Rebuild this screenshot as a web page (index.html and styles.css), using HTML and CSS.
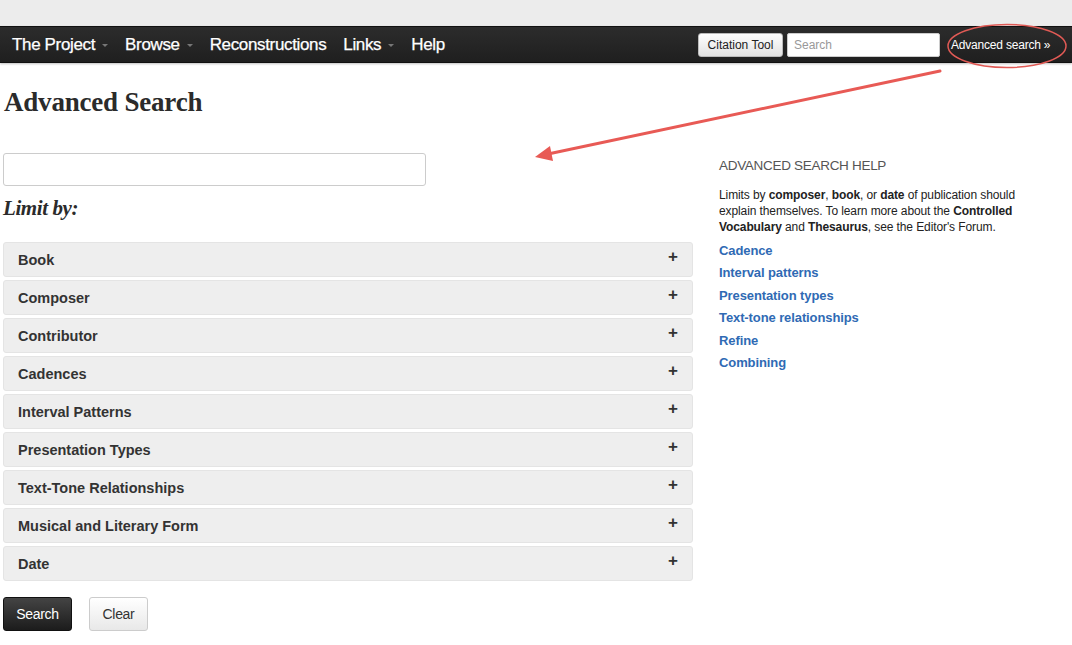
FILE: index.html
```html
<!DOCTYPE html>
<html>
<head>
<meta charset="utf-8">
<link rel="stylesheet" href="styles.css">
</head>
<body>
<div class="topstrip"></div>
<nav class="navbar">
  <ul class="nav">
    <li>The Project <span class="caret"></span></li>
    <li>Browse <span class="caret"></span></li>
    <li>Reconstructions</li>
    <li>Links <span class="caret"></span></li>
    <li>Help</li>
  </ul>
  <div class="nav-right">
    <button class="btn-cite">Citation Tool</button>
    <input class="nav-search" type="text" placeholder="Search">
    <a class="adv-link">Advanced search »</a>
  </div>
</nav>
<main class="page">
  <h1 class="title">Advanced Search</h1>
  <div class="columns">
    <section class="left">
      <input class="query" type="text">
      <h2 class="limit">Limit by:</h2>
      <div class="panels">
        <div class="panel"><span>Book</span><span class="plus">+</span></div>
        <div class="panel"><span>Composer</span><span class="plus">+</span></div>
        <div class="panel"><span>Contributor</span><span class="plus">+</span></div>
        <div class="panel"><span>Cadences</span><span class="plus">+</span></div>
        <div class="panel"><span>Interval Patterns</span><span class="plus">+</span></div>
        <div class="panel"><span>Presentation Types</span><span class="plus">+</span></div>
        <div class="panel"><span>Text-Tone Relationships</span><span class="plus">+</span></div>
        <div class="panel"><span>Musical and Literary Form</span><span class="plus">+</span></div>
        <div class="panel"><span>Date</span><span class="plus">+</span></div>
      </div>
      <div class="actions">
        <button class="btn-search">Search</button>
        <button class="btn-clear">Clear</button>
      </div>
    </section>
    <aside class="right">
      <h3 class="help-title">ADVANCED SEARCH HELP</h3>
      <p class="help-text">Limits by <b>composer</b>, <b>book</b>, or <b>date</b> of publication should explain themselves. To learn more about the <b>Controlled Vocabulary</b> and <b>Thesaurus</b>, see the Editor's Forum.</p>
      <ul class="help-links">
        <li>Cadence</li>
        <li>Interval patterns</li>
        <li>Presentation types</li>
        <li>Text-tone relationships</li>
        <li>Refine</li>
        <li>Combining</li>
      </ul>
    </aside>
  </div>
</main>
<svg class="annot" width="1072" height="645" viewBox="0 0 1072 645">
  <ellipse cx="1007" cy="46" rx="59" ry="21.5" fill="none" stroke="#e05a55" stroke-width="1.5"/>
  <line x1="940" y1="71" x2="548" y2="154" stroke="#e85a55" stroke-width="3" stroke-linecap="round"/>
  <polygon points="535,157 550,146 553,161" fill="#e85a55"/>
</svg>
</body>
</html>
```
FILE: styles.css
```css
* { box-sizing: border-box; }
html, body { margin: 0; padding: 0; }
body {
  font-family: "Liberation Sans", Arial, sans-serif;
  color: #333;
  background: #fff;
  width: 1072px;
  height: 645px;
  overflow: hidden;
  position: relative;
}
.topstrip { height: 26px; background: #ececec; }
.navbar {
  height: 37px;
  background: linear-gradient(#2c2c2c, #1f1f1f);
  border-top: 1px solid #111;
  border-bottom: 1px solid #111;
  box-shadow: 0 1px 2px rgba(0,0,0,0.25);
  display: flex;
  align-items: center;
  justify-content: space-between;
  padding-left: 12px;
}
.nav {
  list-style: none;
  margin: 0;
  padding: 0;
  display: flex;
}
.nav li {
  color: #fff;
  font-size: 17px;
  letter-spacing: -0.35px;
  margin-right: 17px;
  display: flex;
  align-items: center;
  -webkit-text-stroke: 0.25px #fff;
}
.caret {
  display: inline-block;
  width: 0; height: 0;
  border-left: 3px solid transparent;
  border-right: 3px solid transparent;
  border-top: 3px solid #777;
  margin-left: 7px;
  margin-top: 1px;
}
.nav-right { display: flex; align-items: center; }
.btn-cite {
  font-family: "Liberation Sans", Arial, sans-serif;
  font-size: 12px;
  color: #222;
  height: 24px;
  width: 85px;
  padding: 0;
  border: 1px solid #bbb;
  border-radius: 3px;
  background: linear-gradient(#fff, #e2e2e2);
  margin-right: 4px;
}
.nav-search {
  width: 153px;
  height: 24px;
  border: 1px solid #ccc;
  border-radius: 2px;
  padding: 2px 6px;
  font-family: "Liberation Sans", Arial, sans-serif;
  font-size: 12px;
  margin-right: 11px;
}
.nav-search::placeholder { color: #999; }
.adv-link {
  color: #fff;
  font-size: 12px;
  letter-spacing: -0.2px;
  width: 121px;
}
.page { padding: 0 0 0 3px; }
.title {
  font-family: "Liberation Serif", "Times New Roman", serif;
  font-weight: bold;
  font-size: 27px;
  color: #2b2b2b;
  margin: 24px 0 0 1px;
  line-height: 30px;
  letter-spacing: -0.2px;
}
.columns { display: flex; margin-top: 36px; }
.left { width: 690px; }
.query {
  display: block;
  width: 423px;
  height: 33px;
  border: 1px solid #ccc;
  border-radius: 3px;
  margin: 0;
}
.limit {
  font-family: "Liberation Serif", "Times New Roman", serif;
  font-style: italic;
  font-weight: bold;
  font-size: 21px;
  color: #2b2b2b;
  margin: 9px 0 0 0;
  line-height: 26px;
  letter-spacing: -0.4px;
}
.panels {
  margin-top: 21px;
  display: flex;
  flex-direction: column;
  gap: 3px;
}
.panel {
  height: 35px;
  background: #eeeeee;
  border: 1px solid #e4e4e4;
  border-radius: 3px;
  display: flex;
  justify-content: space-between;
  align-items: center;
  padding: 0 14px 0 14px;
  font-size: 14.5px;
  font-weight: bold;
  color: #333;
}
.plus {
  font-size: 17px;
  font-weight: bold;
  color: #333;
  margin-top: -6px;
}
.actions {
  margin-top: 16px;
  display: flex;
  gap: 17px;
}
.btn-search {
  width: 69px;
  height: 34px;
  background: linear-gradient(#444, #1c1c1c);
  color: #fff;
  border: 1px solid #111;
  border-radius: 3px;
  font-family: "Liberation Sans", Arial, sans-serif;
  font-size: 14px;
  letter-spacing: -0.3px;
}
.btn-clear {
  width: 59px;
  height: 34px;
  background: linear-gradient(#fff, #e8e8e8);
  color: #333;
  border: 1px solid #ccc;
  border-radius: 3px;
  font-family: "Liberation Sans", Arial, sans-serif;
  font-size: 14px;
  letter-spacing: -0.3px;
}
.right { margin-left: 26px; width: 320px; }
.help-title {
  font-weight: normal;
  font-size: 13.5px;
  color: #555;
  margin: 4px 0 0 0;
  line-height: 18px;
  letter-spacing: -0.3px;
}
.help-text {
  font-size: 12px;
  line-height: 16px;
  color: #222;
  margin: 12px 0 0 0;
  letter-spacing: -0.1px;
}
.help-links {
  list-style: none;
  margin: 5px 0 0 0;
  padding: 0;
}
.help-links li {
  color: #2f6ab4;
  font-weight: bold;
  font-size: 13px;
  line-height: 22.4px;
  letter-spacing: -0.1px;
}
.annot {
  position: absolute;
  left: 0;
  top: 0;
  pointer-events: none;
}
```
